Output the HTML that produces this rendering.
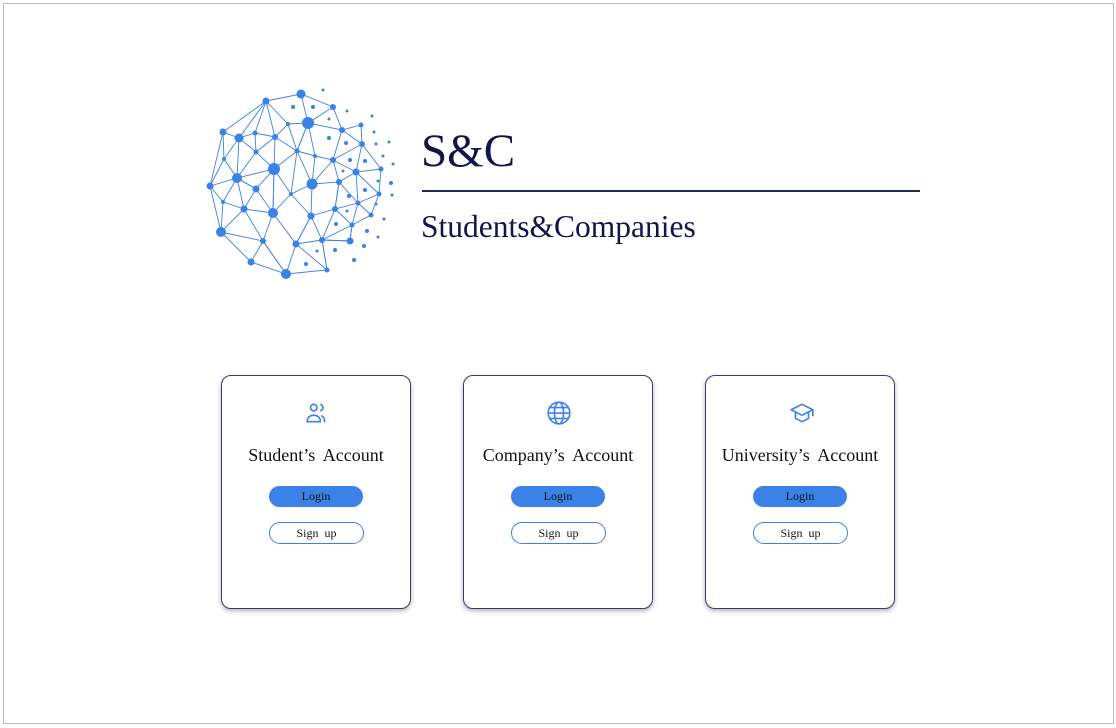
<!DOCTYPE html>
<html><head><meta charset="utf-8"><style>
body{margin:0;width:1116px;height:728px;background:#fff;position:relative;overflow:hidden;font-family:"Liberation Serif",serif}
.frame{position:absolute;left:3px;top:3px;width:1109px;height:719px;border:1px solid #bdbdbd}
.t1{position:absolute;left:421px;top:121px;font-size:47px;color:#14144a;line-height:60px}
.line{position:absolute;left:422px;top:190px;width:498px;height:1.5px;background:#1e2a5e}
.t2{position:absolute;left:421px;top:208px;font-size:31.5px;color:#14144a;line-height:38px}
.card{position:absolute;top:375px;width:188px;height:232px;border:1px solid #3a3a72;border-radius:10px;box-shadow:0 2px 5px rgba(0,0,0,.3);background:#fff}
.card svg{position:absolute;left:82px;top:24px}
.ct{position:absolute;top:69px;left:0;width:100%;text-align:center;font-size:18px;word-spacing:4px;color:#111}
.btn{position:absolute;left:47px;width:94px;height:21px;border-radius:11px;text-align:center;font-size:12px;line-height:21px;word-spacing:3px;color:#111}
.login{top:110px;background:#3b82e8}
.sign{top:146px;border:1px solid #3b82e8;height:20px;line-height:20px;width:93px}
</style></head><body>
<div class="frame"></div>
<svg style="position:absolute;left:0;top:0" width="420" height="300">
<g stroke="#3b82e8" stroke-width="0.9" fill="none">
<polyline points="266,101 301,94 333,107 342,130 361,125 362,144 381,169 379,194 371,215 352,225 350,241 322,240 327,270 286,274 251,262 221,232 210,186 223,132 266,101"/>
<polyline points="266,101 239,138 223,132"/>
<polyline points="266,101 255,133 275,137 266,101 288,124 308,123 301,94"/>
<polyline points="308,123 333,107 308,123 342,130 333,160 362,144 342,130"/>
<polyline points="308,123 297,151 288,124 275,137 297,151 315,156 308,123"/>
<polyline points="315,156 333,160 356,172 362,144"/>
<polyline points="239,138 255,133 256,152 239,138 224,159 237,178 239,138"/>
<polyline points="256,152 275,137 274,169 256,152 237,178 274,169 297,151"/>
<polyline points="274,169 291,194 312,184 315,156 297,151 312,184 333,160 339,182 312,184 311,216 291,194 273,213 274,169 256,189 237,178 210,186 224,159 223,132"/>
<polyline points="256,189 273,213 244,209 256,189 237,178 244,209 223,202 237,178"/>
<polyline points="210,186 223,202 221,232 244,209 263,241 273,213 296,244 311,216 335,209 339,182 356,172 381,169"/>
<polyline points="356,172 358,203 339,182 335,209 358,203 379,194 356,172"/>
<polyline points="358,203 371,215 358,203 352,225 335,209 322,240 311,216 296,244 322,240 350,241 352,225 322,240 327,270 296,244 286,274 263,241 251,262"/>
<polyline points="221,232 263,241 286,274"/>
<polyline points="308,123 297,151 291,194"/>
<polyline points="274,169 273,213"/>
</g>
<g fill="#3b82e8">
<circle cx="266" cy="101" r="3.5"/><circle cx="301" cy="94" r="4.5"/><circle cx="333" cy="107" r="3"/><circle cx="223" cy="132" r="3.5"/><circle cx="239" cy="138" r="4.5"/><circle cx="255" cy="133" r="2.5"/><circle cx="275" cy="137" r="3"/><circle cx="288" cy="124" r="2"/><circle cx="308" cy="123" r="6"/><circle cx="342" cy="130" r="3"/><circle cx="361" cy="125" r="2.5"/><circle cx="362" cy="144" r="3"/><circle cx="297" cy="151" r="2.5"/><circle cx="315" cy="156" r="2"/><circle cx="333" cy="160" r="3"/><circle cx="256" cy="152" r="2.5"/><circle cx="224" cy="159" r="2"/><circle cx="274" cy="169" r="6"/><circle cx="237" cy="178" r="5"/><circle cx="210" cy="186" r="3.5"/><circle cx="256" cy="189" r="3.5"/><circle cx="291" cy="194" r="2"/><circle cx="312" cy="184" r="5.5"/><circle cx="339" cy="182" r="3"/><circle cx="356" cy="172" r="3.5"/><circle cx="381" cy="169" r="2.5"/><circle cx="223" cy="202" r="2"/><circle cx="244" cy="209" r="3.5"/><circle cx="273" cy="213" r="5"/><circle cx="311" cy="216" r="3.5"/><circle cx="335" cy="209" r="3"/><circle cx="358" cy="203" r="2.5"/><circle cx="379" cy="194" r="2.5"/><circle cx="371" cy="215" r="2.5"/><circle cx="352" cy="225" r="2.5"/><circle cx="221" cy="232" r="5"/><circle cx="263" cy="241" r="3"/><circle cx="296" cy="244" r="3.5"/><circle cx="322" cy="240" r="3"/><circle cx="350" cy="241" r="3.5"/><circle cx="251" cy="262" r="3.5"/><circle cx="286" cy="274" r="5"/><circle cx="327" cy="270" r="2.5"/>
<circle cx="323" cy="90" r="1.5"/><circle cx="293" cy="107" r="2"/><circle cx="313" cy="107" r="2"/><circle cx="329" cy="119" r="1.5"/><circle cx="347" cy="111" r="1.5"/><circle cx="372" cy="116" r="1.5"/><circle cx="374" cy="132" r="1.5"/><circle cx="376" cy="144" r="1.5"/><circle cx="389" cy="142" r="1.5"/><circle cx="329" cy="138" r="2"/><circle cx="346" cy="143" r="2"/><circle cx="350" cy="160" r="2"/><circle cx="365" cy="161" r="2"/><circle cx="383" cy="156" r="1.5"/><circle cx="393" cy="164" r="1.5"/><circle cx="343" cy="171" r="1.5"/><circle cx="378" cy="181" r="1.5"/><circle cx="391" cy="183" r="2"/><circle cx="365" cy="190" r="2"/><circle cx="349" cy="196" r="2"/><circle cx="392" cy="195" r="1.5"/><circle cx="376" cy="204" r="1.5"/><circle cx="347" cy="211" r="1.5"/><circle cx="336" cy="224" r="2"/><circle cx="384" cy="219" r="1.5"/><circle cx="367" cy="231" r="2"/><circle cx="378" cy="237" r="1.5"/><circle cx="364" cy="246" r="2"/><circle cx="335" cy="250" r="2"/><circle cx="317" cy="251" r="1.5"/><circle cx="306" cy="264" r="2"/><circle cx="354" cy="260" r="2"/>
</g></svg>
<div class="t1">S&amp;C</div>
<div class="line"></div>
<div class="t2">Students&amp;Companies</div>

<div class="card" style="left:221px">
<svg width="26" height="26" viewBox="0 0 24 24" fill="none" stroke="#3b82e8" stroke-width="1.5" stroke-linecap="round"><circle cx="9" cy="7" r="3"/><path d="M3 20v-1a6 5 0 0 1 12 0v1z"/><path d="M15.5 4.2a3 3 0 0 1 0 5.6M19 20v-1a5 5 0 0 0-2.5-4.2"/></svg>
<div class="ct">Student’s Account</div>
<div class="btn login">Login</div><div class="btn sign">Sign up</div></div>
<div class="card" style="left:463px">
<svg width="26" height="26" viewBox="0 0 24 24" fill="none" stroke="#3b82e8" stroke-width="1.5"><circle cx="12" cy="12" r="10"/><ellipse cx="12" cy="12" rx="4.2" ry="10"/><path d="M2 12h20M3.5 7h17M3.5 17h17"/></svg>
<div class="ct">Company’s Account</div>
<div class="btn login">Login</div><div class="btn sign">Sign up</div></div>
<div class="card" style="left:705px">
<svg width="28" height="26" viewBox="0 0 24 24" fill="none" stroke="#3b82e8" stroke-width="1.5" stroke-linejoin="round"><path d="M12 4L2 9l10 5 10-5z"/><path d="M6 11v6l6 3 6-3v-6M22 9v6"/></svg>
<div class="ct">University’s Account</div>
<div class="btn login">Login</div><div class="btn sign">Sign up</div></div>
</body></html>
